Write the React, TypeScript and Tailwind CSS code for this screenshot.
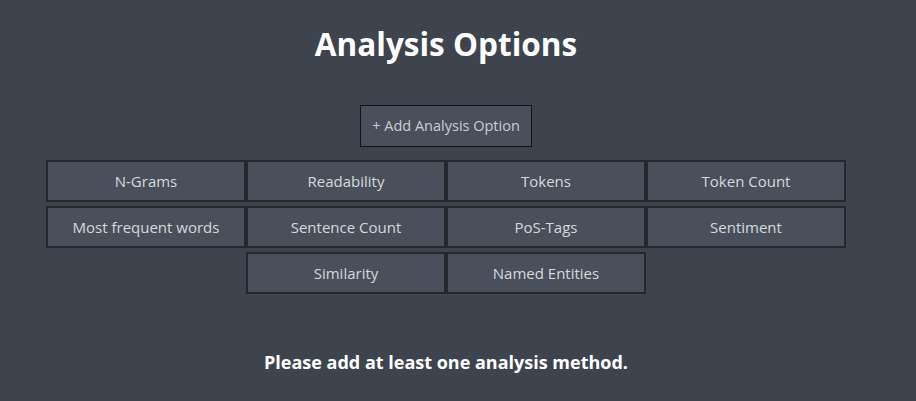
const options = [
  "N-Grams",
  "Readability",
  "Tokens",
  "Token Count",
  "Most frequent words",
  "Sentence Count",
  "PoS-Tags",
  "Sentiment",
  "Similarity",
  "Named Entities",
];

const OptionButton = ({ label }: { label: string }) => (
  <button className="w-[200px] h-[42px] pt-[1px] bg-[#4a505b] border-2 border-[#25282e] text-[15px] text-[#d5d8dc]">
    {label}
  </button>
);

export default function App() {
  return (
    <div
      className="w-[916px] h-[401px] bg-[#3e444e] pr-[24px] flex flex-col items-center"
      style={{ fontFamily: '"Open Sans", "Noto Sans", sans-serif' }}
    >
      <h1 className="mt-[22px] text-[31.5px] font-bold text-white leading-[44px]">
        Analysis Options
      </h1>
      <button className="mt-[39px] h-[42px] px-[11px] bg-[#4a505b] border border-[#111316] text-[14.5px] text-[#c9cdd3]">
        + Add Analysis Option
      </button>
      <div className="mt-[13px] w-[800px] flex flex-wrap justify-center gap-y-[4px]">
        {options.map((o) => (
          <OptionButton key={o} label={o} />
        ))}
      </div>
      <p className="mt-[55px] text-[18px] font-bold text-white">
        Please add at least one analysis method.
      </p>
    </div>
  );
}
